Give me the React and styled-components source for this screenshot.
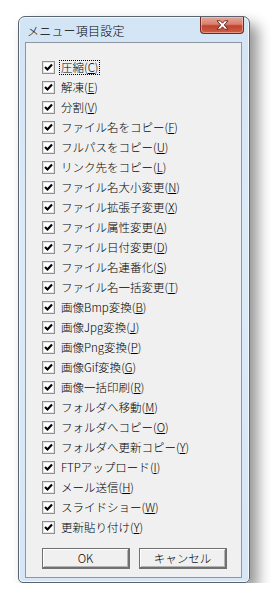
import styled, { createGlobalStyle } from 'styled-components'

const GlobalStyle = createGlobalStyle`
  html, body {
    margin: 0;
    padding: 0;
    background: #ffffff;
  }
  body {
    font-family: "Noto Sans CJK JP", "Liberation Sans", sans-serif;
  }
`

const items = [
  ['圧縮', 'C'],
  ['解凍', 'E'],
  ['分割', 'V'],
  ['ファイル名をコピー', 'F'],
  ['フルパスをコピー', 'U'],
  ['リンク先をコピー', 'L'],
  ['ファイル名大小変更', 'N'],
  ['ファイル拡張子変更', 'X'],
  ['ファイル属性変更', 'A'],
  ['ファイル日付変更', 'D'],
  ['ファイル名連番化', 'S'],
  ['ファイル名一括変更', 'T'],
  ['画像Bmp変換', 'B'],
  ['画像Jpg変換', 'J'],
  ['画像Png変換', 'P'],
  ['画像Gif変換', 'G'],
  ['画像一括印刷', 'R'],
  ['フォルダへ移動', 'M'],
  ['フォルダへコピー', 'O'],
  ['フォルダへ更新コピー', 'Y'],
  ['FTPアップロード', 'I'],
  ['メール送信', 'H'],
  ['スライドショー', 'W'],
  ['更新貼り付け', 'Y'],
]

const MenuSettingsDialog = () => {
  return (
    <>
      <GlobalStyle />
      <Window>
        <TitleBar>
          <Title>メニュー項目設定</Title>
          <CloseButton>
            <svg width='13' height='10' viewBox='0 0 13 10'>
              <path
                d='M1 0.8 H4.4 L6.5 3.2 L8.6 0.8 H12 L8.3 5 L12 9.2 H8.6 L6.5 6.8 L4.4 9.2 H1 L4.7 5 Z'
                fill='#ffffff'
                stroke='#5a1f18'
                strokeWidth='0.9'
                strokeLinejoin='round'
              />
            </svg>
          </CloseButton>
        </TitleBar>
        <Client>
          <List>
            {items.map(([label, key], i) => (
              <Row key={i}>
                <CheckBox>
                  <svg width='9' height='9' viewBox='0 0 9 9'>
                    <path
                      d='M1 4 L3.5 6.5 L8 1.5'
                      fill='none'
                      stroke='#000'
                      strokeWidth='2.1'
                    />
                  </svg>
                </CheckBox>
                <Label focused={i === 0}>
                  {label}(<u>{key}</u>)
                </Label>
              </Row>
            ))}
          </List>
          <Buttons>
            <Button>OK</Button>
            <Button>キャンセル</Button>
          </Buttons>
        </Client>
      </Window>
    </>
  )
}

const Window = styled.div`
  margin: 16px 0 0 18px;
  width: 232px;
  height: 567px;
  box-sizing: border-box;
  border: 1px solid #59636e;
  border-radius: 7px 7px 5px 5px;
  background: linear-gradient(to bottom, #d3e4f5 0%, #dceaf8 40%, #d6e6f6 100%);
  box-shadow: 8px 8px 14px rgba(0, 0, 0, 0.42), inset 0 0 0 1px #f2f8fd;
  display: flex;
  flex-direction: column;
`

const TitleBar = styled.div`
  height: 25px;
  display: flex;
  align-items: flex-start;
  padding-left: 8px;
  padding-right: 5px;
`

const Title = styled.div`
  font-size: 12px;
  font-weight: 300;
  line-height: 12px;
  margin-top: 8px;
  color: #000;
  letter-spacing: 0.2px;
`

const CloseButton = styled.div`
  margin-left: auto;
  width: 44px;
  height: 17px;
  box-sizing: border-box;
  border: 1px solid #6e2a22;
  border-top: none;
  border-radius: 0 0 4px 4px;
  background: linear-gradient(to bottom, #e6a699 0%, #d8806f 45%, #c2432f 55%, #cf5e44 100%);
  box-shadow: inset 0 0 0 1px rgba(255, 210, 200, 0.5);
  display: flex;
  align-items: center;
  justify-content: center;
`

const Client = styled.div`
  margin: 0 7px 0 6px;
  height: 536px;
  box-sizing: border-box;
  border: 1px solid #8d97a3;
  background: #f0f0f0;
  display: flex;
  flex-direction: column;
  padding: 14px 0 0 16px;
`

const List = styled.div`
  display: flex;
  flex-direction: column;
`

const Row = styled.div`
  height: 20px;
  display: flex;
  align-items: center;
`

const CheckBox = styled.div`
  width: 13px;
  height: 13px;
  box-sizing: border-box;
  border: 1px solid #8e8f8f;
  background: #ffffff;
  box-shadow: inset 0 0 0 1px #e4e4e4;
  display: flex;
  align-items: center;
  justify-content: center;
  margin-right: 4px;
`

const Label = styled.span`
  font-size: 11.5px;
  font-weight: 300;
  line-height: 13px;
  color: #000;
  padding: 0 1px;
  border: 1px dotted ${(p) => (p.focused ? '#000' : 'transparent')};
  u {
    text-decoration: underline;
    text-underline-offset: 1px;
  }
`

const Buttons = styled.div`
  display: flex;
  gap: 9px;
  margin-top: 11px;
`

const Button = styled.div`
  width: 88px;
  height: 21px;
  box-sizing: border-box;
  border: 1px solid #707070;
  border-bottom-width: 2px;
  border-right-width: 2px;
  background: #f0f0f0;
  box-shadow: inset 1px 1px #ffffff, inset -1px -1px #b4b4b4;
  font-size: 11.5px;
  font-weight: 300;
  display: flex;
  align-items: center;
  justify-content: center;
  color: #000;
`

export default MenuSettingsDialog
